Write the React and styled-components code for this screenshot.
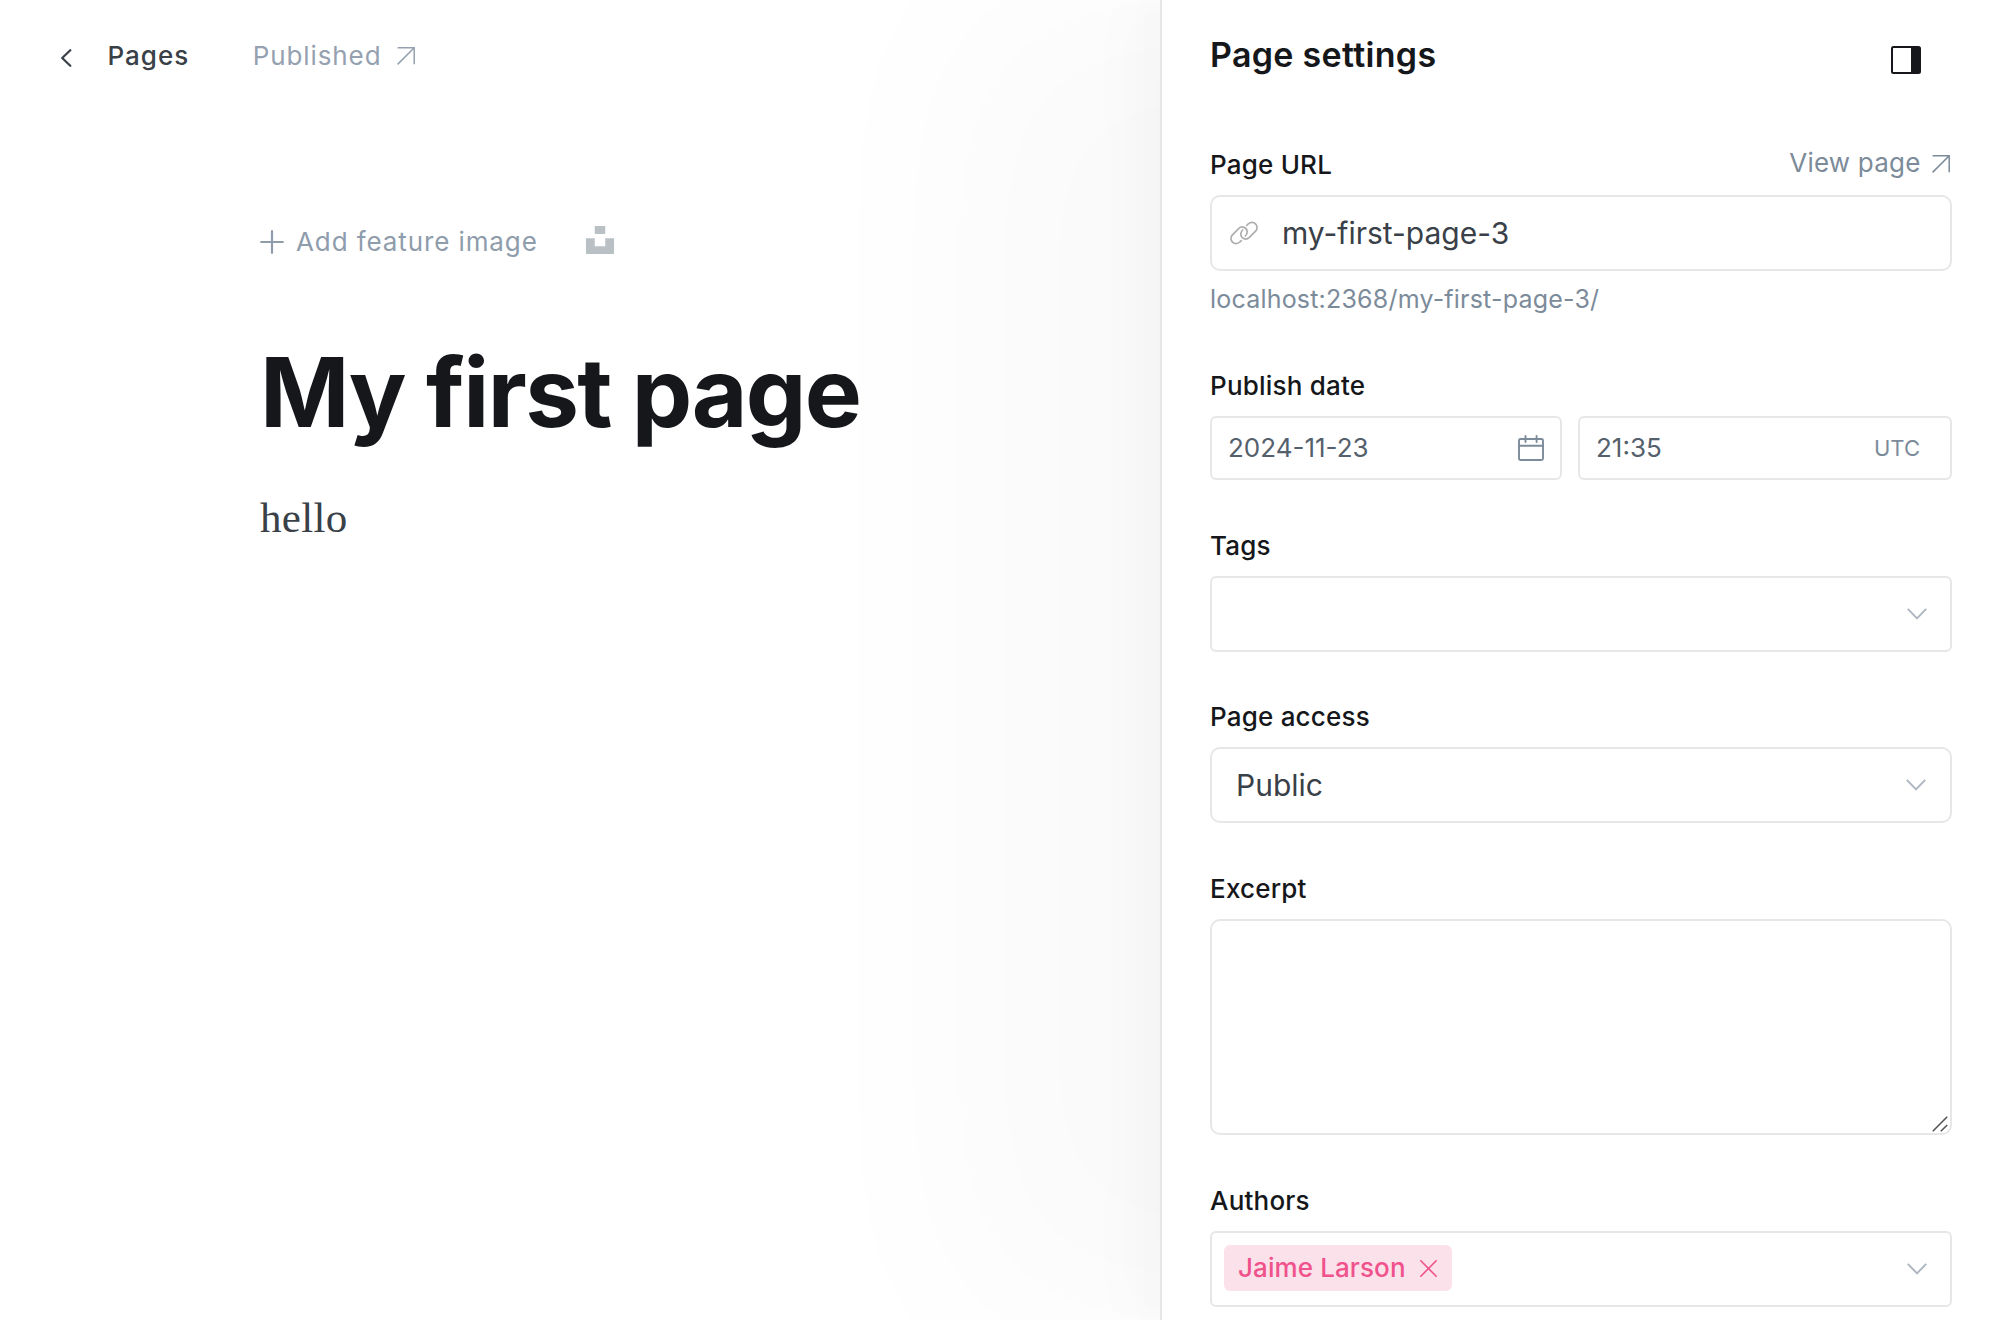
import React from "react";
import styled, { createGlobalStyle } from "styled-components";

const GlobalStyle = createGlobalStyle`
  * { box-sizing: border-box; }
  body {
    margin: 0;
    background: #fff;
    font-family: Inter, "Liberation Sans", sans-serif;
    font-size: 26px;
    line-height: 32px;
    color: #15171a;
    overflow: hidden;
    -webkit-font-smoothing: antialiased;
  }
`;

const Layout = styled.div`
  display: flex;
  width: 2000px;
  height: 1320px;
`;

const Editor = styled.main`
  flex: 1;
  min-width: 0;
`;

const TopBar = styled.header`
  display: flex;
  align-items: center;
  height: 80px;
  padding: 32px 0 0 60px;
`;

const BackLink = styled.a`
  display: flex;
  align-items: center;
  height: 48px;
  font-weight: 500;
  letter-spacing: 1px;
  color: #394047;
  svg { margin-right: 35.5px; margin-top: 3px; }
`;

const Status = styled.a`
  display: flex;
  align-items: center;
  gap: 15px;
  margin-left: 63.5px;
  letter-spacing: 0.9px;
  color: #95a1b0;
`;

const Canvas = styled.section`
  padding: 146px 0 0 260px;
`;

const FeatureImage = styled.div`
  display: flex;
  align-items: center;
  height: 32px;
  color: #8e9cac;
  letter-spacing: 0.9px;
`;

const FeatureLabel = styled.span`
  margin: 0 48px 0 12px;
`;

const Title = styled.h1`
  margin: 81px 0 0;
  font-size: 96px;
  line-height: 106px;
  font-weight: 700;
  letter-spacing: -1.65px;
`;

const Body = styled.p`
  margin: 43px 0 0;
  font-family: "Liberation Serif", serif;
  font-size: 43px;
  line-height: 60px;
  letter-spacing: 0.3px;
  color: #394047;
`;

const Panel = styled.aside`
  width: 840px;
  border-left: 2px solid #e6e7e8;
  padding: 0 48px 0 48px;
  background: #fff;
  box-shadow:
    -8px 0 8px rgba(0, 0, 0, 0.004),
    -20px 0 20px rgba(0, 0, 0, 0.012),
    -45px 0 45px rgba(0, 0, 0, 0.012),
    -84px 0 67px rgba(0, 0, 0, 0.004),
    -200px 0 200px rgba(0, 0, 0, 0.0235);
`;

const PanelHeader = styled.div`
  display: flex;
  justify-content: space-between;
  align-items: flex-start;
  height: 149px;
  padding: 35px 31px 0 0;
  svg { margin-top: 11px; }
`;

const PanelTitle = styled.h2`
  margin: 0;
  font-size: 34px;
  line-height: 40px;
  font-weight: 600;
  letter-spacing: 0.3px;
`;

const Group = styled.div`
  margin-bottom: ${(p) => p.$gap ?? 50}px;
`;

const LabelRow = styled.div`
  display: flex;
  justify-content: space-between;
  height: 46px;
`;

const Label = styled.label`
  font-weight: 500;
  letter-spacing: 0.2px;
`;

const ViewLink = styled.a`
  display: flex;
  align-items: center;
  gap: 11px;
  height: 32px;
  margin-top: -2px;
  padding-right: 2.5px;
  letter-spacing: 0.2px;
  color: #7c8b9a;
  svg { margin-top: 2px; }
`;

const Field = styled.div`
  display: flex;
  align-items: center;
  justify-content: space-between;
  width: ${(p) => (p.$width ? p.$width + "px" : "auto")};
  height: ${(p) => p.$height ?? 76}px;
  border: 2px solid #e6e7e8;
  border-radius: ${(p) => p.$radius ?? 6}px;
  padding: ${(p) => p.$pad ?? "0 23px 0 12px"};
  background: #fff;
`;

const UrlField = styled(Field)`
  gap: 24px;
`;

const Value = styled.span`
  flex: 1;
  font-size: 30px;
  line-height: 40px;
  color: #394047;
`;

const SmallValue = styled.span`
  color: #54606c;
`;

const Zone = styled.span`
  font-size: 22px;
  color: #7c8b9a;
`;

const Hint = styled.p`
  margin: 13px 0 0;
  font-size: 25px;
  line-height: 30px;
  letter-spacing: 0.2px;
  color: #7c8b9a;
`;

const Row = styled.div`
  display: flex;
  gap: 16px;
`;

const ExcerptBox = styled(Field)`
  align-items: flex-end;
  justify-content: flex-end;
`;

const Chip = styled.span`
  display: flex;
  align-items: center;
  gap: 14px;
  height: 46px;
  margin-bottom: 2px;
  padding: 0 15px 1px 14px;
  border-radius: 6px;
  background: #fbe1ea;
  color: #f0528c;
  font-weight: 500;
  letter-spacing: 0.1px;
  svg { margin-top: 1px; }
`;

const ArrowIcon = () => (
  <svg width="18" height="18" viewBox="0 0 18 18" fill="none" stroke="currentColor" strokeWidth="1.5">
    <path d="M.6 17.4 17.2.8M.6.8h16.6v16.4" />
  </svg>
);

const DownIcon = () => (
  <svg width="20" height="12" viewBox="0 0 20 12" fill="none" stroke="#aeb7c1" strokeWidth="2">
    <path d="m.8.9 9.2 9.5L19.2.9" />
  </svg>
);

const BackIcon = () => (
  <svg width="12" height="18" viewBox="0 0 12 18" fill="none" stroke="currentColor" strokeWidth="2.2" strokeLinecap="round" strokeLinejoin="round">
    <path d="M10.3 1.2 2.2 9l8.1 7.8" />
  </svg>
);

const PlusIcon = () => (
  <svg width="24" height="24" viewBox="0 0 24 24" stroke="currentColor" strokeWidth="2.2" strokeLinecap="round">
    <path d="M12 1.2v21.6M1.2 12h21.6" />
  </svg>
);

const UnsplashMark = styled.svg`
  margin-bottom: 4px;
`;

const UnsplashIcon = () => (
  <UnsplashMark width="28" height="28" viewBox="0 0 32 32" fill="#b9c1c4">
    <path d="M10 9V0h12v9H10zm12 5h10v18H0V14h10v9h12v-9z" />
  </UnsplashMark>
);

const SidebarIcon = () => (
  <svg width="30" height="28" viewBox="0 0 30 28">
    <rect x="1" y="1" width="28" height="26" rx="1.5" fill="none" stroke="#15171a" strokeWidth="2" />
    <path d="M20 1h9v26h-9z" fill="#15171a" />
  </svg>
);

const LinkIcon = () => (
  <svg width="28" height="24" viewBox="0 0 28 24" fill="none" stroke="#aeaeae" strokeWidth="1.7" strokeLinecap="round">
    <path d="M11.3 19.6 9.7 21A5 5 0 0 1 2.4 13.9L8.9 7.3A5 5 0 0 1 17.2 10.5C17.3 12.3 16.5 13.8 15.3 15" />
    <path d="M16.7 4.4 18.3 3A5 5 0 0 1 25.6 10.1L19.1 16.7A5 5 0 0 1 10.8 13.5C10.7 11.7 11.5 10.2 12.7 9" />
  </svg>
);

const CalendarIcon = () => (
  <svg width="26" height="26" viewBox="0 0 26 26" fill="none" stroke="#7c8b9a" strokeWidth="1.9" strokeLinecap="round">
    <rect x="1" y="4" width="24" height="21" rx="1.5" />
    <path d="M1 10.8h24M7.5 1v6M18.6 1v6" />
  </svg>
);

const CloseIcon = () => (
  <svg width="17" height="17" viewBox="0 0 17 17" stroke="currentColor" strokeWidth="1.6" strokeLinecap="round">
    <path d="m.8.8 15.4 15.4M16.2.8.8 16.2" />
  </svg>
);

const GripIcon = () => (
  <svg width="16" height="16" viewBox="0 0 16 16" stroke="#555" strokeWidth="1.6">
    <path d="M.8 15.2 15.2.8M8.8 15.2l6.4-6.2" />
  </svg>
);

export default function App() {
  return (
    <>
      <GlobalStyle />
      <Layout>
        <Editor>
          <TopBar>
            <BackLink><BackIcon />Pages</BackLink>
            <Status>Published<ArrowIcon /></Status>
          </TopBar>
          <Canvas>
            <FeatureImage>
              <PlusIcon />
              <FeatureLabel>Add feature image</FeatureLabel>
              <UnsplashIcon />
            </FeatureImage>
            <Title>My first page</Title>
            <Body>hello</Body>
          </Canvas>
        </Editor>
        <Panel>
          <PanelHeader>
            <PanelTitle>Page settings</PanelTitle>
            <SidebarIcon />
          </PanelHeader>
          <Group $gap={56}>
            <LabelRow>
              <Label>Page URL</Label>
              <ViewLink>View page<ArrowIcon /></ViewLink>
            </LabelRow>
            <UrlField $radius={10} $pad="0 18px">
              <LinkIcon />
              <Value>my-first-page-3</Value>
            </UrlField>
            <Hint>localhost:2368/my-first-page-3/</Hint>
          </Group>
          <Group>
            <LabelRow><Label>Publish date</Label></LabelRow>
            <Row>
              <Field $width={352} $height={64} $pad="0 16px">
                <SmallValue>2024-11-23</SmallValue>
                <CalendarIcon />
              </Field>
              <Field $width={374} $height={64} $pad="0 30px 0 16px">
                <SmallValue>21:35</SmallValue>
                <Zone>UTC</Zone>
              </Field>
            </Row>
          </Group>
          <Group $gap={49}>
            <LabelRow><Label>Tags</Label></LabelRow>
            <Field><span /><DownIcon /></Field>
          </Group>
          <Group>
            <LabelRow><Label>Page access</Label></LabelRow>
            <Field $radius={10} $pad="0 24px"><Value>Public</Value><DownIcon /></Field>
          </Group>
          <Group>
            <LabelRow><Label>Excerpt</Label></LabelRow>
            <ExcerptBox $height={216} $radius={10} $pad="0 2px 1px 0"><GripIcon /></ExcerptBox>
          </Group>
          <Group>
            <LabelRow><Label>Authors</Label></LabelRow>
            <Field><Chip>Jaime Larson<CloseIcon /></Chip><DownIcon /></Field>
          </Group>
        </Panel>
      </Layout>
    </>
  );
}
